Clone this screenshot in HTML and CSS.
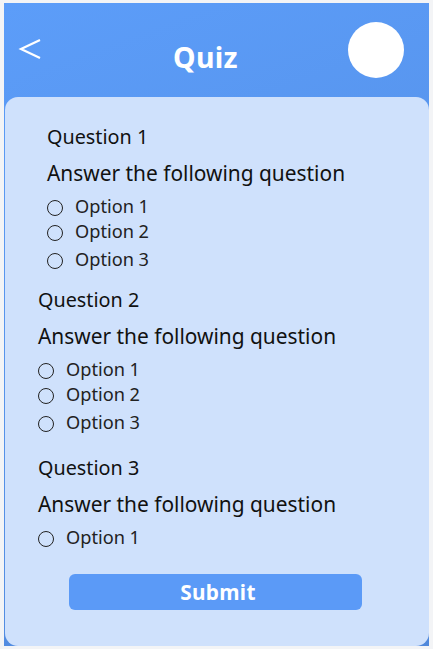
FILE: index.html
```html
<!DOCTYPE html>
<html>
<head>
<meta charset="utf-8">
<link rel="stylesheet" href="styles.css">
</head>
<body>
<div class="phone">
  <header class="topbar">
    <svg class="back" width="24" height="22" viewBox="0 0 24 22"><polyline points="22,2 3,11 22,20" fill="none" stroke="#fff" stroke-width="2.2" stroke-linejoin="miter"/></svg>
    <h1 class="title">Quiz</h1>
    <div class="avatar"></div>
  </header>
  <main class="card">
    <section class="question q1">
      <div class="qtitle">Question 1</div>
      <div class="qtext">Answer the following question</div>
      <ul class="options">
        <li class="option"><span class="radio"></span>Option 1</li>
        <li class="option"><span class="radio"></span>Option 2</li>
        <li class="option"><span class="radio"></span>Option 3</li>
      </ul>
    </section>
    <section class="question q2">
      <div class="qtitle">Question 2</div>
      <div class="qtext">Answer the following question</div>
      <ul class="options">
        <li class="option"><span class="radio"></span>Option 1</li>
        <li class="option"><span class="radio"></span>Option 2</li>
        <li class="option"><span class="radio"></span>Option 3</li>
      </ul>
    </section>
    <section class="question q3">
      <div class="qtitle">Question 3</div>
      <div class="qtext">Answer the following question</div>
      <ul class="options">
        <li class="option"><span class="radio"></span>Option 1</li>
      </ul>
    </section>
    <div class="actions">
      <button class="submit">Submit</button>
    </div>
  </main>
</div>
</body>
</html>
```
FILE: styles.css
```css
* { box-sizing: border-box; }
html, body { margin: 0; padding: 0; }
body {
  width: 433px;
  height: 649px;
  background: #f3f4f6;
  font-family: "Noto Sans", sans-serif;
  color: #111;
  padding: 3px 4px 3px 4px;
}
.phone {
  height: 643px;
  display: flex;
  flex-direction: column;
  background: linear-gradient(160deg, #5c9df9 0%, #5088db 100%);
}
.topbar {
  height: 94px;
  display: grid;
  grid-template-columns: 1fr auto 1fr;
  align-items: start;
  padding-right: 22px;
}
.back {
  margin: 35px 0 0 14px;
}
.title {
  margin: 34px 0 0 0;
  text-align: center;
  color: #fff;
  font-size: 28.5px;
  font-weight: 700;
  line-height: 40px;
  letter-spacing: 0.3px;
}
.avatar {
  justify-self: end;
  width: 56px;
  height: 56px;
  border-radius: 50%;
  background: #fff;
  margin: 19px 3px 0 0;
}
.card {
  flex: 1;
  margin-left: 1px;
  background: #cfe1fc;
  border-radius: 13px;
  padding-top: 26px;
  display: flex;
  flex-direction: column;
}
.question { display: flex; flex-direction: column; }
.q1 { padding-left: 42px; }
.q2 { padding-left: 33px; margin-top: 15px; }
.q3 { padding-left: 33px; margin-top: 20px; }
.qtitle {
  font-size: 19.8px;
  line-height: 28px;
}
.qtext {
  font-size: 20.9px;
  line-height: 28px;
  margin-top: 8px;
}
.options {
  list-style: none;
  margin: 7px 0 0 0;
  padding: 0;
}
.option {
  display: flex;
  align-items: center;
  height: 24px;
  font-size: 18.2px;
  color: #222;
}
.option:nth-child(2) { margin-top: 1px; }
.option:nth-child(3) { margin-top: 4px; }
.radio {
  width: 16px;
  height: 16px;
  border: 1.3px solid #222;
  border-radius: 50%;
  margin: 3px 12px 0 0;
  flex: none;
}
.actions {
  display: flex;
  justify-content: center;
  margin-top: 25px;
  padding-right: 4px;
}
.submit {
  width: 293px;
  height: 36px;
  border: none;
  border-radius: 6px;
  background: #5b9af7;
  color: #fff;
  font-family: inherit;
  font-size: 20.8px;
  font-weight: 700;
  letter-spacing: 0.3px;
  padding-left: 12px;
  padding-top: 1px;
}
```
